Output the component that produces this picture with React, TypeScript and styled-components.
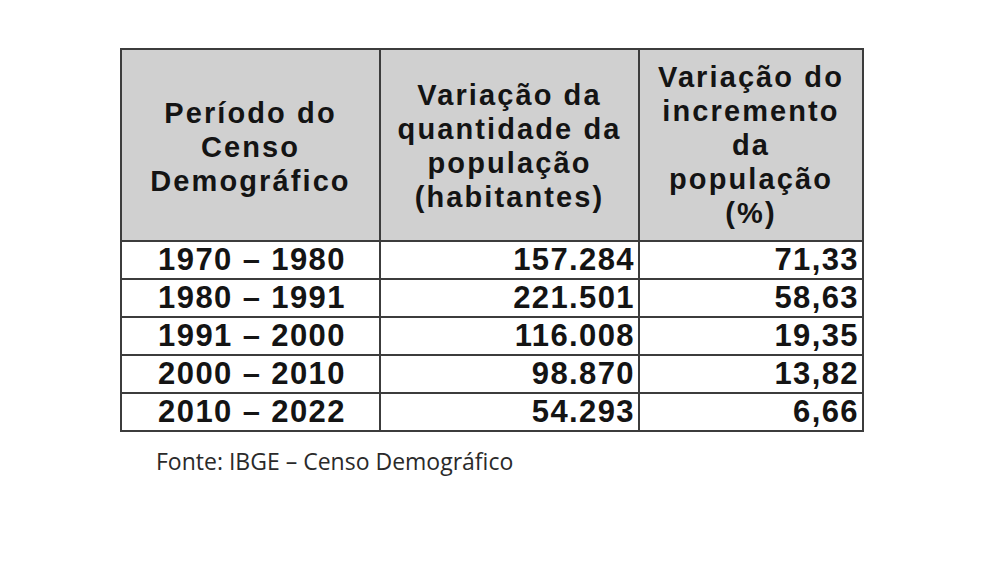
import styled, { createGlobalStyle } from 'styled-components';

const GlobalStyle = createGlobalStyle`
  html, body {
    margin: 0;
    padding: 0;
    background: #ffffff;
  }
  body {
    font-family: "Liberation Sans", Arial, sans-serif;
  }
`;

type Row = {
  period: string;
  amount: string;
  rate: string;
};

const rows: Row[] = [
  { period: '1970 – 1980', amount: '157.284', rate: '71,33' },
  { period: '1980 – 1991', amount: '221.501', rate: '58,63' },
  { period: '1991 – 2000', amount: '116.008', rate: '19,35' },
  { period: '2000 – 2010', amount: '98.870', rate: '13,82' },
  { period: '2010 – 2022', amount: '54.293', rate: '6,66' },
];

const App = () => {
  return (
    <Page>
      <GlobalStyle />
      <Table>
        <colgroup>
          <col style={{ width: 259 }} />
          <col style={{ width: 259 }} />
          <col style={{ width: 224 }} />
        </colgroup>
        <thead>
          <tr>
            <HeadCell shift={4}>
              Período do
              <br />
              Censo
              <br />
              Demográfico
            </HeadCell>
            <HeadCell shift={2}>
              Variação da
              <br />
              quantidade da
              <br />
              população
              <br />
              (habitantes)
            </HeadCell>
            <HeadCell shift={0}>
              Variação do
              <br />
              incremento
              <br />
              da
              <br />
              população
              <br />
              (%)
            </HeadCell>
          </tr>
        </thead>
        <tbody>
          {rows.map((row) => (
            <BodyRow key={row.period}>
              <Cell align="center">{row.period}</Cell>
              <Cell align="right">{row.amount}</Cell>
              <Cell align="right">{row.rate}</Cell>
            </BodyRow>
          ))}
        </tbody>
      </Table>
      <Source>Fonte: IBGE – Censo Demográfico</Source>
    </Page>
  );
};

const Page = styled.div`
  display: flex;
  flex-direction: column;
  align-items: flex-start;
  padding: 48px 0 0 120px;
  width: 1000px;
  height: 566px;
  box-sizing: border-box;
`;

const Table = styled.table`
  border-collapse: collapse;
  table-layout: fixed;
  width: 744px;
  border: 2px solid #3c3c3c;
  color: #141414;
`;

const HeadCell = styled.th<{ shift: number }>`
  height: ${({ shift }) => 190 - shift}px;
  padding: ${({ shift }) => `${shift}px 4px 0`};
  background: #d0d0d0;
  border: 2px solid #3c3c3c;
  font-size: 29px;
  line-height: 34px;
  letter-spacing: 2.1px;
  font-weight: 700;
  text-align: center;
  vertical-align: middle;
  white-space: nowrap;
`;

const BodyRow = styled.tr`
  height: 38px;
`;

const Cell = styled.td<{ align: 'center' | 'right' }>`
  padding: 0 3px 0 6px;
  border: 2px solid #3c3c3c;
  font-size: 31px;
  line-height: 34px;
  letter-spacing: 1.4px;
  font-weight: 700;
  text-align: ${({ align }) => align};
  vertical-align: middle;
  white-space: nowrap;
`;

const Source = styled.p`
  margin: 14px 0 0 36px;
  font-family: "Open Sans", "Liberation Sans", sans-serif;
  font-size: 23px;
  line-height: 30px;
  color: #2a2a2a;
`;

export default App;
